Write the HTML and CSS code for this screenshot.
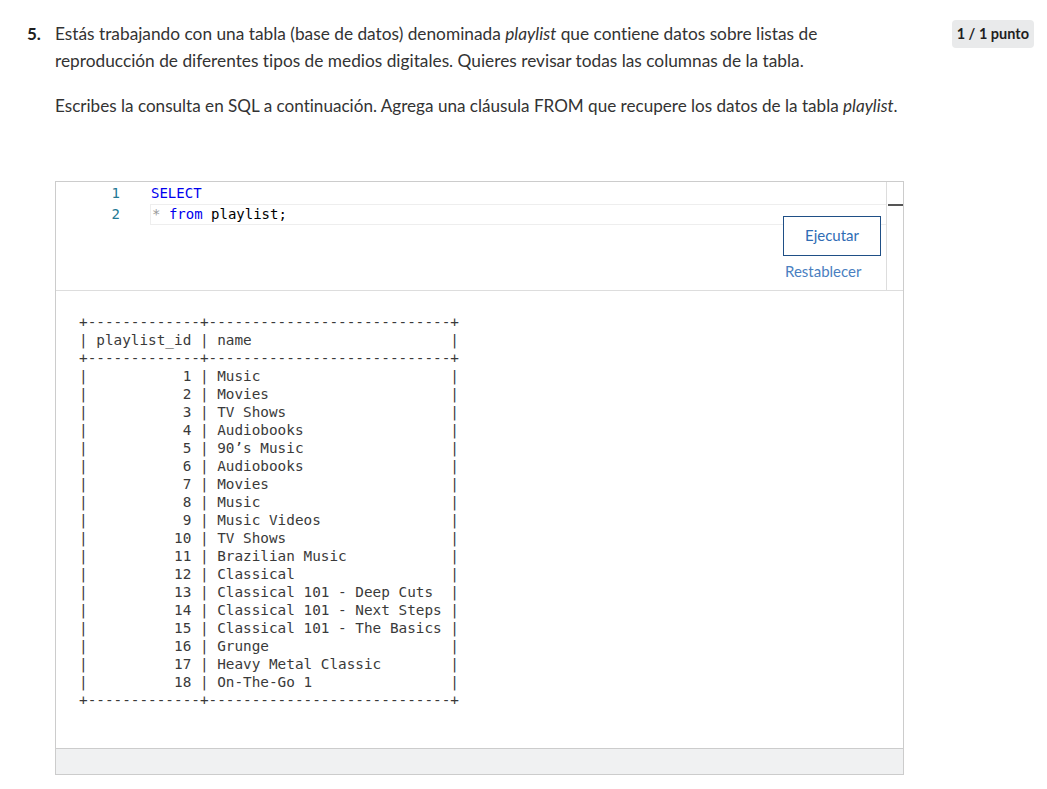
FILE: index.html
```html
<!DOCTYPE html>
<html lang="es">
<head>
<meta charset="utf-8">
<title>Pregunta 5</title>
<link rel="stylesheet" href="styles.css">
</head>
<body>
<div class="question">
  <div class="qnum">5.</div>
  <div class="qbody">
    <p class="para">Estás trabajando con una tabla (base de datos) denominada <em>playlist</em> que contiene datos sobre listas de<br>reproducción de diferentes tipos de medios digitales. Quieres revisar todas las columnas de la tabla.</p>
    <p class="para second">Escribes la consulta en SQL a continuación. Agrega una cláusula FROM que recupere los datos de la tabla <em>playlist</em>.</p>

    <div class="editor">
      <div class="code-area">
        <div class="gutter">
          <div class="ln">1</div>
          <div class="ln">2</div>
        </div>
        <div class="code">
          <div class="line"><span class="kw">SELECT</span></div>
          <div class="line active"><span class="op">*</span> <span class="kw">from</span> playlist;</div>
        </div>
        <div class="scroll"><div class="thumb"></div></div>
      </div>
      <div class="actions">
        <button class="run">Ejecutar</button>
        <a class="reset">Restablecer</a>
      </div>
      <div class="output">
<pre class="result">+-------------+----------------------------+
| playlist_id | name                       |
+-------------+----------------------------+
|           1 | Music                      |
|           2 | Movies                     |
|           3 | TV Shows                   |
|           4 | Audiobooks                 |
|           5 | 90’s Music                 |
|           6 | Audiobooks                 |
|           7 | Movies                     |
|           8 | Music                      |
|           9 | Music Videos               |
|          10 | TV Shows                   |
|          11 | Brazilian Music            |
|          12 | Classical                  |
|          13 | Classical 101 - Deep Cuts  |
|          14 | Classical 101 - Next Steps |
|          15 | Classical 101 - The Basics |
|          16 | Grunge                     |
|          17 | Heavy Metal Classic        |
|          18 | On-The-Go 1                |
+-------------+----------------------------+</pre>
      </div>
      <div class="footer"></div>
    </div>
  </div>
  <div class="badge">1 / 1 punto</div>
</div>
</body>
</html>
```

FILE: styles.css
```css
html, body {
  margin: 0;
  padding: 0;
  background: #ffffff;
}

body {
  font-family: "Lato", "Open Sans", sans-serif;
  font-variant-ligatures: none;
  color: #333333;
  font-size: 16px;
}

.question {
  display: flex;
  align-items: flex-start;
  padding: 20px 13px 0 27px;
}

.qnum {
  width: 28px;
  flex: none;
  font-weight: 700;
  font-size: 17px;
  line-height: 27px;
  color: #1f1f1f;
}

.qbody {
  flex: 1;
}

.para {
  margin: 0;
  line-height: 27px;
  font-size: 17.3px;
}

.para.second {
  margin-top: 18px;
  font-size: 17.1px;
}

.badge {
  flex: none;
  margin-top: 0;
  background: #e9eaeb;
  border-radius: 4px;
  padding: 0 5px;
  height: 28px;
  line-height: 28px;
  font-size: 14.5px;
  font-weight: 700;
  color: #1f1f1f;
}

.editor {
  position: relative;
  margin-top: 62px;
  width: 847px;
  border: 1px solid #cccccc;
}

.code-area {
  display: flex;
  height: 108px;
  border-bottom: 1px solid #dddddd;
  font-family: "DejaVu Sans Mono", "Liberation Mono", monospace;
  font-size: 14px;
}

.gutter {
  width: 64px;
  flex: none;
  padding-top: 1px;
  text-align: right;
  color: #237893;
}

.ln {
  height: 21px;
  line-height: 21px;
}

.code {
  flex: 1;
  margin-left: 30px;
  padding-top: 1px;
}

.line {
  height: 21px;
  line-height: 21px;
  padding-left: 1px;
  color: #000000;
  white-space: pre;
}

.line.active {
  height: 19px;
  line-height: 19px;
  border: 1px solid #eeeeee;
  border-right: none;
}

.kw {
  color: #0000ee;
}

.op {
  color: #999999;
}

.scroll {
  width: 16px;
  flex: none;
  border-left: 1px solid #dddddd;
  position: relative;
}

.thumb {
  position: absolute;
  left: 1px;
  right: 0;
  top: 22px;
  height: 2px;
  background: #555555;
}

.actions {
  position: absolute;
  top: 34px;
  right: 22px;
  width: 98px;
  display: flex;
  flex-direction: column;
  align-items: flex-start;
}

.run {
  width: 98px;
  height: 40px;
  background: #ffffff;
  border: 1px solid #1f4f86;
  color: #2f6db5;
  font-family: "Lato", "Open Sans", sans-serif;
  font-size: 15px;
  padding: 0 0 3px 0;
  margin: 0;
}

.reset {
  margin-top: 6px;
  margin-left: 2px;
  color: #4a7fc1;
  font-size: 15px;
  line-height: 18px;
}

.output {
  height: 457px;
  padding: 0 0 0 23px;
}

.result {
  margin: 0;
  padding-top: 22px;
  font-family: "DejaVu Sans Mono", "Liberation Mono", monospace;
  font-size: 14.35px;
  line-height: 18px;
  color: #3a3a3a;
}

.footer {
  height: 25px;
  border-top: 1px solid #cccccc;
  background: #f0f1f2;
}
```
